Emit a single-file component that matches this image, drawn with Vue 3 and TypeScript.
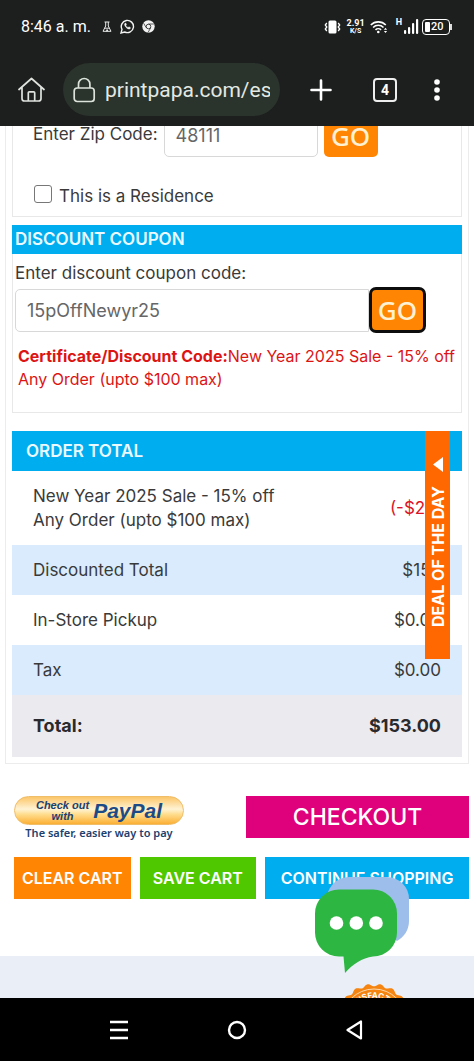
<script setup lang="ts">
import { ref } from 'vue'

interface OrderLine {
  label: string[]
  amount: string
  discount?: boolean
}

const zipCode = ref('48111')
const residence = ref(false)
const couponCode = ref('15pOffNewyr25')

const lines: OrderLine[] = [
  { label: ['New Year 2025 Sale - 15% off', 'Any Order (upto $100 max)'], amount: '(-$27)', discount: true },
  { label: ['Discounted Total'], amount: '$153' },
  { label: ['In-Store Pickup'], amount: '$0.00' },
  { label: ['Tax'], amount: '$0.00' },
]

function scallop(cx: number, cy: number, r: number, bumps: number): string {
  const steps = bumps * 12
  const points: string[] = []
  for (let i = 0; i < steps; i++) {
    const a = (i / steps) * Math.PI * 2 - Math.PI / 2
    const rr = r + 1.3 * Math.cos(bumps * (a + Math.PI / 2) + Math.PI)
    points.push(`${(cx + rr * Math.cos(a)).toFixed(2)},${(cy + rr * Math.sin(a)).toFixed(2)}`)
  }
  return points.join(' ')
}

const sealPoints = scallop(38, 38, 36, 18)
</script>

<template>
  <div class="phone">
    <header class="browser">
      <div class="status">
        <span class="clock">8:46 a. m.</span>
        <svg class="flask" width="10" height="12" viewBox="0 0 10 12" fill="none" stroke="#e8e8e8" stroke-width="1">
          <path d="M2.5 1h5M3.7 1v4L1 10.3h8L6.3 5V1M2.6 7.2h4.8M4.3 10.5l.8-2 .8 2" />
        </svg>
        <svg class="whatsapp" width="15" height="15" viewBox="0 0 15 15" fill="none" stroke="#f2f2f2">
          <path d="M1 14l1-3.6A6.1 6.1 0 1 1 4.7 13z" stroke-width="1.4" />
          <path d="M5 4.3c-.9.8-.6 2.2.9 3.9 1.6 1.8 3.2 2.4 4.2 1.5l.5-.9-1.7-1-.8.8C6.9 8 6.2 7.2 5.9 6.400l.6-.8-.7-1.500z" fill="#f2f2f2" stroke-width=".4" />
        </svg>
        <svg class="chrome" width="13" height="13" viewBox="0 0 13 13">
          <circle cx="6.5" cy="6.5" r="6.2" fill="#f2f2f2" />
          <circle cx="6.5" cy="6.5" r="2.3" fill="none" stroke="#1d1e1e" stroke-width=".8" />
          <path d="M6.5 4h5.400M4.300 7.800L1.600 3.200M8.700 7.800L6 12.500" stroke="#1d1e1e" stroke-width=".7" />
        </svg>
        <span class="grow"></span>
        <svg class="vibrate" width="17" height="14" viewBox="0 0 17 14">
          <rect x="4.5" y="0.5" width="8" height="13" rx="1.5" fill="#fff" />
          <path d="M2.8 3l-1.500 2 1.500 2-1.500 2 1.500 2M14.200 3l1.500 2-1.500 2 1.500 2-1.500 2" fill="none" stroke="#fff" stroke-width="1.3" />
        </svg>
        <span class="speed"><b>2.91</b><small>K/S</small></span>
        <svg class="wifi" width="18" height="14" viewBox="0 0 18 14" fill="none" stroke="#fff" stroke-width="1.6">
          <path d="M.8 5a10.500 10.500 0 0 1 15 0M3.100 7.500a7.200 7.200 0 0 1 10.400 0M5.500 9.900a4 4 0 0 1 5.600 0" />
          <circle cx="8.3" cy="12" r="1.3" fill="#fff" stroke="none" />
          <path d="M15.500 7.800l1.600 2h-3.200zM15.500 13l1.600-2h-3.200z" fill="#fff" stroke="none" />
        </svg>
        <span class="network">H</span>
        <svg width="15" height="15" viewBox="0 0 15 15" fill="#fff">
          <rect x="0" y="11" width="2.2" height="4" rx="1" />
          <rect x="4" y="8" width="2.2" height="7" rx="1" />
          <rect x="8" y="4" width="2.2" height="11" rx="1" />
          <rect x="12" y="0" width="2.2" height="15" rx="1" />
        </svg>
        <span class="battery"><i></i>20</span>
      </div>

      <div class="toolbar">
        <button class="icon-button" aria-label="Home">
          <svg width="27" height="26" viewBox="0 0 27 26" fill="none" stroke="#dfe3de" stroke-width="1.7" stroke-linejoin="round" stroke-linecap="round">
            <path d="M1 12.500L13.500 1.500 26 12.500M4 10.500V21.500a2.500 2.500 0 0 0 2.500 2.500h14a2.500 2.500 0 0 0 2.500-2.500V10.500M10.300 24v-8.200a1 1 0 0 1 1-1h4.400a1 1 0 0 1 1 1V24" />
          </svg>
        </button>
        <button class="address">
          <svg width="23" height="26" viewBox="0 0 23 26" fill="none" stroke="#dbe3da" stroke-width="1.7">
            <rect x="1.2" y="11" width="20" height="13.5" rx="3" />
            <path d="M5.500 11V7.200a5.700 5.700 0 0 1 11.400 0V11" />
          </svg>
          <span>printpapa.com/es</span>
        </button>
        <button class="icon-button" aria-label="New tab">
          <svg width="22" height="22" viewBox="0 0 22 22" stroke="#fff" stroke-width="2.6" stroke-linecap="round">
            <path d="M11 1.500v19M1.500 11h19" />
          </svg>
        </button>
        <button class="tabs" aria-label="Open tabs">4</button>
        <button class="icon-button" aria-label="Menu">
          <svg width="6" height="22" viewBox="0 0 6 22" fill="#fff">
            <circle cx="3" cy="3" r="2.8" /><circle cx="3" cy="11" r="2.8" /><circle cx="3" cy="19" r="2.8" />
          </svg>
        </button>
      </div>
    </header>

    <main class="page">
      <section class="cart">
        <form class="panel shipping" @submit.prevent>
          <div class="zip-row">
            <label for="zip">Enter Zip Code:</label>
            <input id="zip" v-model="zipCode" class="field" type="text" />
            <button class="go">GO</button>
          </div>
          <div class="residence">
            <input id="residence" v-model="residence" type="checkbox" />
            <label for="residence">This is a Residence</label>
          </div>
        </form>

        <h2 class="bar">DISCOUNT COUPON</h2>
        <form class="panel coupon" @submit.prevent>
          <label for="coupon">Enter discount coupon code:</label>
          <div class="coupon-row">
            <input id="coupon" v-model="couponCode" class="field" type="text" />
            <button class="go focused">GO</button>
          </div>
          <p class="applied"><strong>Certificate/Discount Code:</strong>New Year 2025 Sale - 15% off Any Order (upto $100 max)</p>
        </form>

        <table class="totals">
          <thead>
            <tr><th colspan="2">ORDER TOTAL</th></tr>
          </thead>
          <tbody>
            <tr v-for="line in lines" :key="line.label[0]">
              <td><div v-for="part in line.label" :key="part">{{ part }}</div></td>
              <td class="amount" :class="{ discount: line.discount }">{{ line.amount }}</td>
            </tr>
          </tbody>
          <tfoot>
            <tr><td>Total:</td><td class="amount">$153.00</td></tr>
          </tfoot>
        </table>
      </section>

      <section class="actions">
        <div class="pay-row">
          <button class="paypal">
            <span class="paypal-pill">
              <span class="paypal-check"><span>Check out</span><span>with</span></span>
              <span class="paypal-name">PayPal</span>
            </span>
            <span class="paypal-note">The safer, easier way to pay</span>
          </button>
          <button class="action checkout">CHECKOUT</button>
        </div>
        <div class="cart-row">
          <button class="action clear">CLEAR CART</button>
          <button class="action save">SAVE CART</button>
          <button class="action shop">CONTINUE SHOPPING</button>
        </div>
      </section>

      <footer class="footer">
        <svg class="seal" width="76" height="76" viewBox="0 0 76 76">
          <polygon :points="sealPoints" fill="#f58410" />
          <circle cx="38" cy="38" r="32" fill="none" stroke="#fbd9b0" stroke-width="1" />
          <path id="seal-arc" d="M15 38a23 23 0 0 1 46 0" fill="none" />
          <text class="seal-text" text-anchor="middle"><textPath href="#seal-arc" startOffset="50%">SATISFACTION</textPath></text>
        </svg>
      </footer>

      <button class="deal">
        <span>DEAL OF THE DAY</span>
        <svg width="10" height="15" viewBox="0 0 10 15"><path d="M0 7.500L10 0v15z" fill="#fff" /></svg>
      </button>

      <button class="chat" aria-label="Chat">
        <svg width="96" height="97" viewBox="0 0 96 97">
          <path d="M36 0h37a22 22 0 0 1 22 22v22c0 9-5 16-12 20L14 15C18 5 26 0 36 0z" fill="#9dbeea" />
          <path d="M25 12.500h34a24 24 0 0 1 24 24v19a24 24 0 0 1-24 24C48 81 39 87 31 96L29.500 79.500H25a24 24 0 0 1-24-24v-19a24 24 0 0 1 24-24z" fill="#2db742" />
          <circle cx="22.5" cy="46" r="6.8" fill="#fff" /><circle cx="42.3" cy="46" r="6.8" fill="#fff" /><circle cx="62" cy="46" r="6.8" fill="#fff" />
        </svg>
      </button>
    </main>

    <nav class="system">
      <button class="icon-button" aria-label="Recent apps">
        <svg width="20" height="20" viewBox="0 0 20 20" stroke="#fff" stroke-width="2.4"><path d="M1 2h18M1 10h18M1 18h18" /></svg>
      </button>
      <button class="icon-button" aria-label="Home screen">
        <svg width="20" height="20" viewBox="0 0 20 20" fill="none" stroke="#fff" stroke-width="2.4"><circle cx="10" cy="10" r="8" /></svg>
      </button>
      <button class="icon-button" aria-label="Back">
        <svg width="20" height="20" viewBox="0 0 20 20" fill="none" stroke="#fff" stroke-width="2.2" stroke-linejoin="round"><path d="M2.500 10L16 1.500v17z" /></svg>
      </button>
    </nav>
  </div>
</template>

<style>
body {
  background: #fff;
}
</style>

<style scoped>
* {
  box-sizing: border-box;
}
.phone {
  display: flex;
  flex-direction: column;
  height: 100vh;
  overflow: hidden;
  font-family: Inter, "Liberation Sans", sans-serif;
  font-size: 17px;
  color: #3a3a3a;
}
button {
  border: 0;
  padding: 0;
  margin: 0;
  background: none;
  font-family: inherit;
  cursor: pointer;
}
svg {
  display: block;
  flex: none;
}

.browser {
  flex: none;
  background: #1d1e1e;
  color: #fff;
  font-family: Roboto, sans-serif;
}
.status {
  display: flex;
  align-items: center;
  height: 53px;
  padding: 0 21px;
}
.clock {
  font-size: 16px;
}
.flask {
  margin-left: 11px;
}
.whatsapp {
  margin-left: 8px;
}
.chrome {
  margin-left: 7px;
}
.grow {
  flex: 1;
}
.speed {
  display: flex;
  flex-direction: column;
  align-items: center;
  margin: 0 5px 0 6px;
  font-size: 9px;
  line-height: 9px;
}
.speed small {
  font-size: 7px;
  font-weight: 700;
  line-height: 7px;
}
.network {
  margin: 0 2px 8px 8px;
  font-size: 9px;
  font-weight: 700;
  line-height: 9px;
}
.battery {
  position: relative;
  display: flex;
  align-items: center;
  gap: 1px;
  width: 28px;
  height: 16px;
  margin: 0 3px 0 3px;
  padding: 2px;
  border: 1px solid #fff;
  border-radius: 4px;
  font-size: 11px;
  font-weight: 500;
}
.battery i {
  width: 5px;
  height: 10px;
  border-radius: 1px;
  background: #fff;
}
.battery::after {
  content: "";
  position: absolute;
  top: 4px;
  right: -3px;
  width: 2px;
  height: 6px;
  background: #ddd;
}
.toolbar {
  display: flex;
  align-items: center;
  height: 73px;
  padding: 0 34px 0 18px;
}
.address {
  display: flex;
  flex: 1;
  align-items: center;
  gap: 9px;
  min-width: 0;
  height: 53px;
  margin: 0 30px 0 18px;
  padding: 0 10px;
  border-radius: 27px;
  background: #2a332c;
  color: #e3e9e2;
  font-size: 21px;
}
.address span {
  overflow: hidden;
  white-space: nowrap;
}
.tabs {
  width: 24px;
  height: 24px;
  margin: 0 37px 0 41px;
  border: 2px solid #eee;
  border-radius: 4px;
  color: #fff;
  font-size: 14px;
  font-weight: 700;
  line-height: 20px;
}

.page {
  position: relative;
  display: flex;
  flex: 1;
  flex-direction: column;
  min-height: 0;
  overflow: hidden;
  background: #fff;
}
.cart {
  margin: -20px 5px 0;
  padding: 0 6px 6px;
  border: 1px solid #ececec;
  border-top: 0;
}
.panel {
  border: 1px solid #e8e8e8;
  border-top: 0;
}
.field {
  height: 43px;
  min-width: 0;
  padding: 0 11px;
  border: 1px solid #d8d8d8;
  border-radius: 5px;
  background: #fff;
  color: #666;
  font-family: inherit;
  font-size: 18px;
}
.go {
  height: 43px;
  width: 54px;
  border-radius: 5px;
  background: #ff8503;
  color: #fff1d2;
  font-family: "Noto Sans", sans-serif;
  font-size: 26px;
  font-weight: 500;
  line-height: 40px;
}
.go.focused {
  width: 57px;
  height: 46px;
  border: 3px solid #0d0d0d;
  border-radius: 7px;
}
.shipping {
  padding: 8px 20px;
}
.zip-row {
  display: flex;
  align-items: center;
  gap: 6px;
}
.zip-row label {
  flex: none;
  line-height: 24px;
  padding-bottom: 3px;
}
.zip-row .field {
  width: 154px;
}
.residence {
  display: flex;
  align-items: center;
  gap: 7px;
  margin-top: 27px;
  line-height: 24px;
}
.residence input {
  appearance: none;
  width: 18px;
  height: 18px;
  margin: 0 0 4px 1px;
  border: 1px solid #777;
  border-radius: 3px;
  background: #fff;
}
.bar {
  margin: 8px 0 0;
  padding: 0 3px;
  background: #00adef;
  color: #eafaff;
  font-size: 17px;
  font-weight: 600;
  line-height: 29px;
}
.coupon {
  padding: 6px 2px 21px;
}
.coupon label {
  display: block;
  line-height: 27px;
}
.coupon-row {
  display: flex;
  align-items: center;
  padding-right: 33px;
}
.coupon-row .field {
  flex: 1;
  border-radius: 5px 0 0 5px;
}
.applied {
  margin: 12px 3px 0;
  color: #dc1414;
  font-size: 16px;
  line-height: 23px;
}
.totals {
  width: 100%;
  margin-top: 18px;
  border-collapse: collapse;
  line-height: 24px;
}
.totals th {
  height: 40px;
  padding: 0 14px;
  background: #00adef;
  color: #eafaff;
  font-size: 17px;
  font-weight: 600;
  text-align: left;
}
.totals td {
  height: 50px;
  padding: 0 21px;
}
.totals tbody tr:first-child td {
  height: 74px;
}
.totals tbody tr:nth-child(even) {
  background: #d9ebfc;
}
.totals tfoot tr {
  background: #ebeaef;
  color: #2a2a2e;
  font-size: 18px;
  font-weight: 700;
}
.totals tfoot td {
  height: 62px;
}
.totals .amount {
  text-align: right;
}
.totals .discount {
  color: #dc1428;
}

.actions {
  display: flex;
  flex-direction: column;
  gap: 19px;
  padding: 32px 5px 57px 14px;
}
.pay-row {
  display: flex;
  align-items: flex-start;
  justify-content: space-between;
  gap: 62px;
}
.paypal {
  display: flex;
  flex: none;
  flex-direction: column;
  align-items: center;
  width: 170px;
  height: 42px;
  color: #1c3f6e;
}
.paypal-pill {
  display: flex;
  flex: none;
  align-items: center;
  justify-content: center;
  gap: 4px;
  width: 100%;
  height: 29px;
  border: 1px solid #f0bd68;
  border-radius: 15px;
  background: linear-gradient(#fcc668, #fff3d4 45%, #ffdc8c 65%, #fbaf34);
}
.paypal-check {
  display: flex;
  flex-direction: column;
  font: italic 700 11px/11px "Liberation Sans", sans-serif;
}
.paypal-name {
  font: italic 700 21px/24px "Liberation Sans", sans-serif;
  color: #1c4a86;
}
.paypal-note {
  font: 600 11px/15px "Noto Sans", sans-serif;
}
.action {
  height: 42px;
  color: #fff;
  font-size: 16px;
  font-weight: 600;
}
.checkout {
  flex: 1;
  background: #df007c;
  font-size: 23px;
  font-weight: 500;
}
.cart-row {
  display: flex;
  gap: 9px;
}
.clear,
.save {
  flex: 4;
}
.shop {
  flex: 7;
}
.clear {
  background: #ff8503;
}
.save {
  background: #50c800;
}
.shop {
  background: #00adef;
}
.footer {
  flex: 1;
  min-height: 0;
  overflow: hidden;
  padding: 27px 62px 0;
  background: #eaeff7;
}
.seal {
  margin-left: auto;
}
.seal-text {
  fill: #fff;
  font-size: 8px;
  font-weight: 700;
}
.deal {
  position: absolute;
  top: 305px;
  right: 24px;
  display: flex;
  flex-direction: column-reverse;
  align-items: center;
  gap: 14px;
  width: 25px;
  height: 228px;
  padding-bottom: 32px;
  background: #ff6700;
  color: #fff;
  font-size: 16px;
  font-weight: 700;
}
.deal span {
  writing-mode: vertical-rl;
  transform: rotate(180deg);
  white-space: nowrap;
}
.chat {
  position: absolute;
  right: 64px;
  bottom: 24px;
}

.system {
  display: flex;
  flex: none;
  align-items: center;
  justify-content: space-between;
  height: 63px;
  padding: 0 109px;
  background: #000;
}
</style>
